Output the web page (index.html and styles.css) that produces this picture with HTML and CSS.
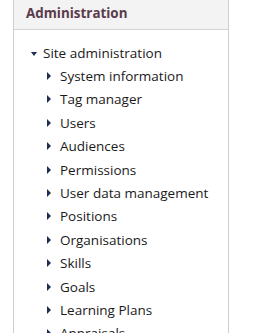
FILE: index.html
```html
<!DOCTYPE html>
<html>
<head>
<meta charset="utf-8">
<link rel="stylesheet" href="styles.css">
</head>
<body>
<div class="block">
  <div class="header"><h2 class="title">Administration</h2></div>
  <div class="content">
    <ul class="tree">
      <li class="node open">
        <div class="row"><span class="caret down"></span><span class="label">Site administration</span></div>
        <ul class="sub">
          <li class="row"><span class="caret right"></span><span class="label">System information</span></li>
          <li class="row"><span class="caret right"></span><span class="label">Tag manager</span></li>
          <li class="row"><span class="caret right"></span><span class="label">Users</span></li>
          <li class="row"><span class="caret right"></span><span class="label">Audiences</span></li>
          <li class="row"><span class="caret right"></span><span class="label">Permissions</span></li>
          <li class="row"><span class="caret right"></span><span class="label">User data management</span></li>
          <li class="row"><span class="caret right"></span><span class="label">Positions</span></li>
          <li class="row"><span class="caret right"></span><span class="label">Organisations</span></li>
          <li class="row"><span class="caret right"></span><span class="label">Skills</span></li>
          <li class="row"><span class="caret right"></span><span class="label">Goals</span></li>
          <li class="row"><span class="caret right"></span><span class="label">Learning Plans</span></li>
          <li class="row"><span class="caret right"></span><span class="label">Appraisals</span></li>
        </ul>
      </li>
    </ul>
  </div>
</div>
</body>
</html>
```
FILE: styles.css
```css
html, body { margin: 0; padding: 0; background: #fff; }
body { font-family: "Open Sans", "Noto Sans", sans-serif; color: #1a1a1a; overflow: hidden; height: 333px; }
.block {
  margin-left: 13px;
  width: 214px;
  border-left: 1px solid #cfcfcf;
  border-right: 1px solid #cfcfcf;
  min-height: 400px;
}
.header {
  background: #f2f3f2;
  border-bottom: 1px solid #d4d4d4;
  height: 30px;
  box-sizing: border-box;
  padding: 3px 0 0 12px;
}
.title {
  margin: 0;
  font-size: 13.4px;
  font-weight: 700;
  color: #5b3b4c;
  line-height: 20px;
}
.content { padding: 11px 0 0 0; }
.tree, .sub { list-style: none; margin: 0; padding: 0; }
.tree > .node > .row { padding-left: 17px; }
.sub > .row { padding-left: 33px; }
.row {
  display: flex;
  align-items: center;
  height: 23.4px;
  font-size: 13.5px;
  white-space: nowrap;
}
.caret { display: inline-block; width: 0; height: 0; }
.caret.down {
  border-left: 3.5px solid transparent;
  border-right: 3.5px solid transparent;
  border-top: 4px solid #1d2d50;
  margin-right: 6px;
  margin-top: 2px;
}
.caret.right {
  border-top: 4px solid transparent;
  border-bottom: 4px solid transparent;
  border-left: 4px solid #1d2d50;
  margin-right: 9px;
}
```
